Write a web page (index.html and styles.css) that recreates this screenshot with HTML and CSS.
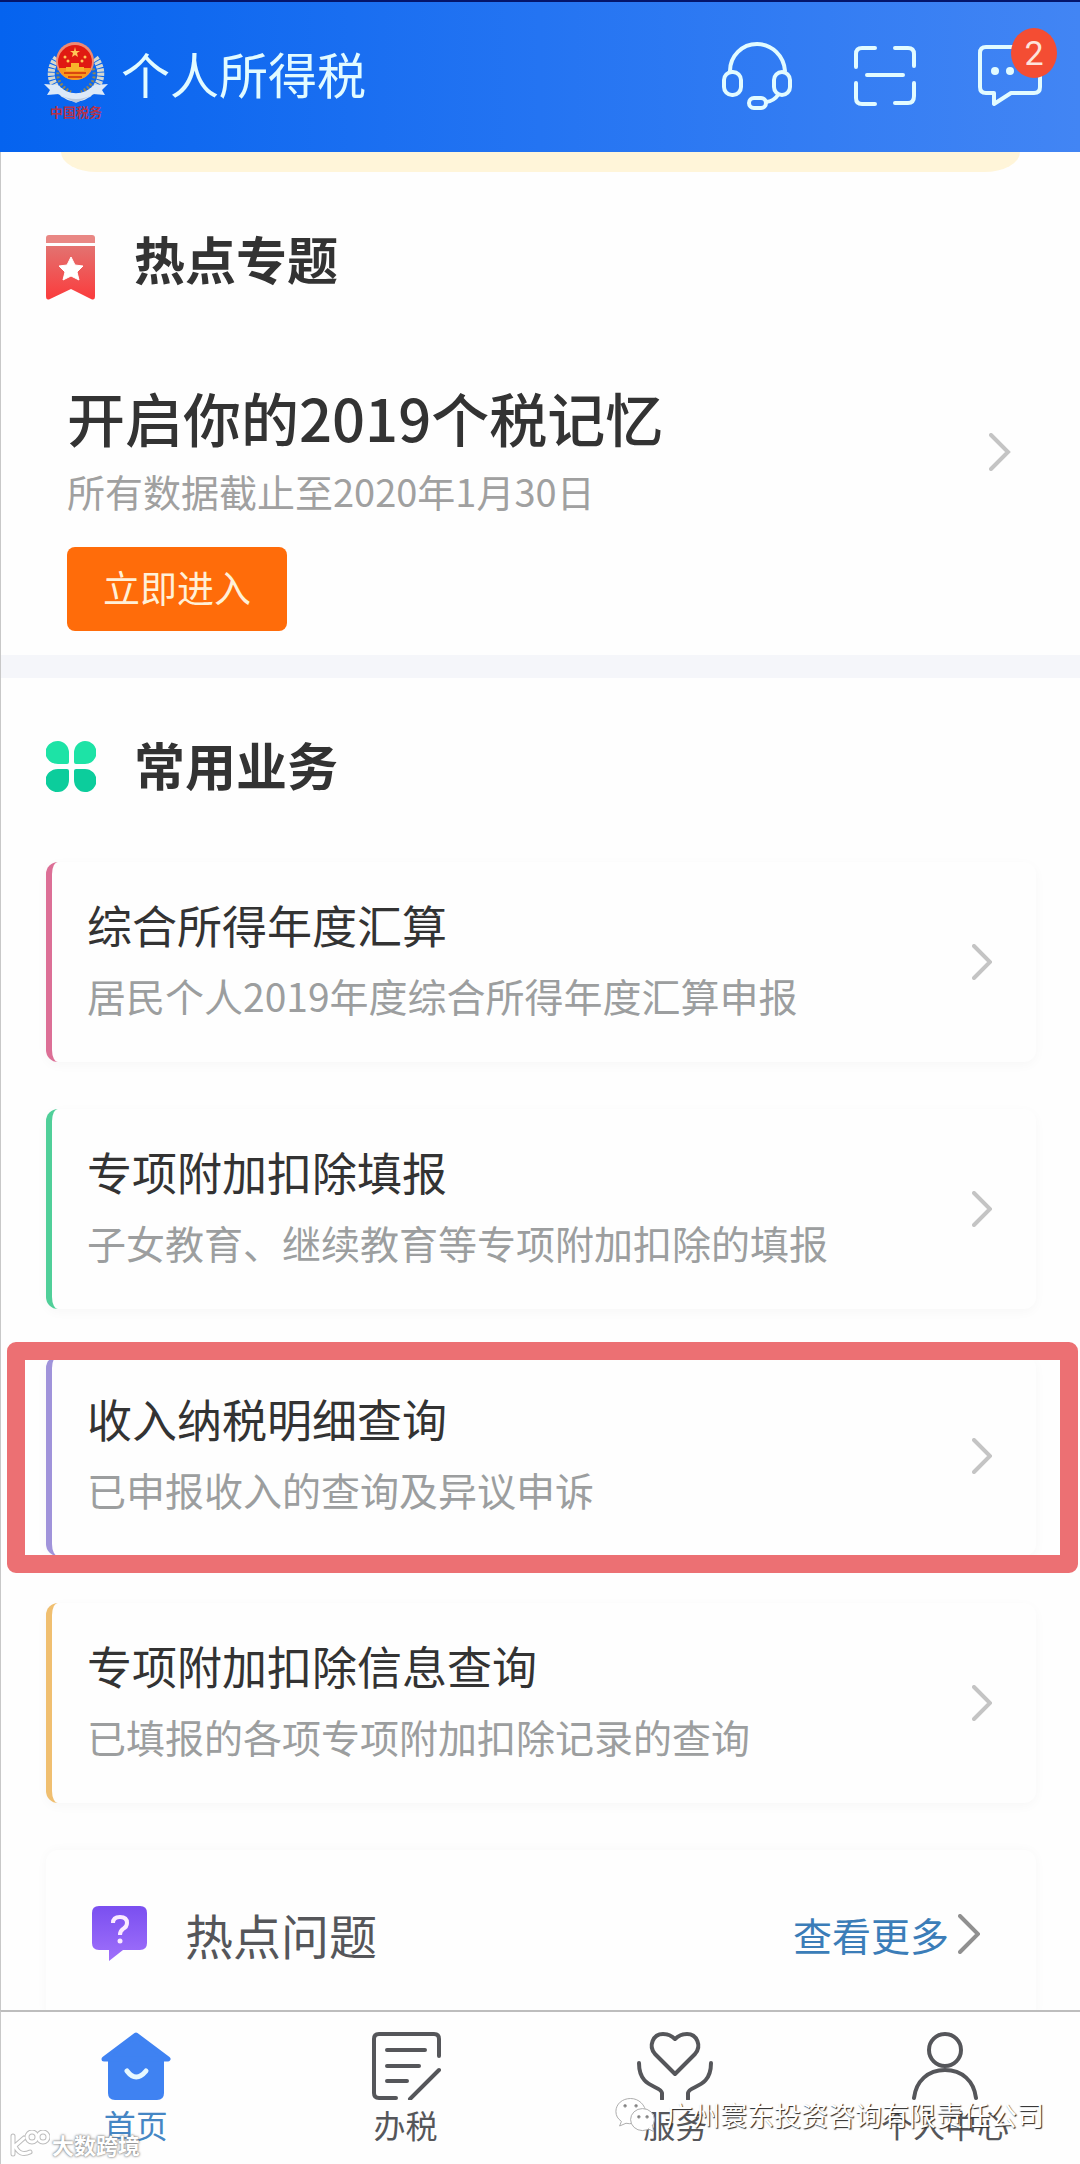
FILE: index.html
```html
<!DOCTYPE html>
<html lang="zh-CN">
<head>
    <meta charset="UTF-8">
    <meta name="viewport" content="width=device-width, initial-scale=1.0">
    <title>个人所得税</title>
    <link rel="stylesheet" href="styles.css">
</head>
<body>
    <header class="header">
        <svg class="logo" width="64" height="80" viewBox="0 0 64 80">
            <path d="M13 17C3 30 6 46 22 54M51 17C61 30 58 46 42 54" fill="none" stroke="#d5d8d0" stroke-width="7" stroke-dasharray="3 1"/>
            <path d="M17 24C10 34 15 45 27 51M47 24C54 34 49 45 37 51" fill="none" stroke="#8d8658" stroke-width="3" stroke-dasharray="2 2"/>
            <path d="M0 43l14 1c10 11 26 11 36 0l14-1-6 6 3 5-12-1c-10 10-24 10-34 0l-12 1 3-5z" fill="#dce9f8"/>
            <path d="M14 53q18 10 36 0l-18 9z" fill="#b9c9dc"/>
            <circle cx="31" cy="20" r="19" fill="#f08a72"/>
            <circle cx="31" cy="21" r="17" fill="#e01a12"/>
            <path d="M15 27h32c-2 8-8 12-16 12s-14-4-16-12z" fill="#f99a1c"/>
            <path d="M22 26h18v4H22zM27 22h8v4h-8z" fill="#f7b52b"/>
            <path d="M20 32h22M24 36h14" stroke="#d9480f" stroke-width="2"/>
            <path d="M31 6l1 4h4l-3 2 1 4-3-2-3 2 1-4-3-2h4z" fill="#ffc857"/>
            <circle cx="21" cy="16" r="1.500" fill="#ffc857"/>
            <circle cx="41" cy="16" r="1.500" fill="#ffc857"/>
            <circle cx="24" cy="20" r="1.500" fill="#ffc857"/>
            <circle cx="38" cy="20" r="1.500" fill="#ffc857"/>
            <text class="logo-text" x="32" y="76" text-anchor="middle">中国税务</text>
        </svg>
        <h1 class="app-title">个人所得税</h1>
        <div class="header-actions">
            <button class="icon-button" aria-label="客服">
                <svg width="70" height="68" viewBox="0 0 70 68" fill="none" stroke="currentColor" stroke-width="4" stroke-linecap="round">
                    <path d="M8 29C8 14 20 2 35 2s27 12 28 27"/>
                    <rect x="2" y="30" width="17" height="23" rx="8"/>
                    <rect x="52" y="30" width="16" height="23" rx="8"/>
                    <path d="M56 53q-4 6-12 7"/>
                    <rect x="27" y="56" width="17" height="10" rx="5"/>
                </svg>
            </button>
            <button class="icon-button" aria-label="扫一扫">
                <svg width="62" height="60" viewBox="0 0 62 60" fill="none" stroke="currentColor" stroke-width="4" stroke-linecap="round">
                    <path d="M21 2H8q-6 0-6 6v13M41 2h13q6 0 6 6v12M2 37v15q0 6 6 6h13M60 37v13q0 7-6 7H41M13 29h36"/>
                </svg>
            </button>
            <button class="icon-button" aria-label="消息">
                <svg width="64" height="62" viewBox="0 0 64 62" fill="none" stroke="currentColor" stroke-width="4" stroke-linejoin="round">
                    <path d="M8 2h48q6 0 6 6v34q0 6-6 6H33L16 59V48H8q-6 0-6-6V8q0-6 6-6z"/>
                    <circle cx="17" cy="26" r="4" fill="currentColor" stroke="none"/>
                    <circle cx="32" cy="26" r="4" fill="currentColor" stroke="none"/>
                </svg>
                <span class="badge">2</span>
            </button>
        </div>
    </header>

    <main class="content">
        <div class="banner"></div>

        <section class="topics">
            <div class="section-head">
                <svg width="50" height="66" viewBox="0 0 50 66">
                    <defs>
                        <linearGradient id="ribbon" x1="0" y1="0" x2="0" y2="1">
                            <stop offset="0" stop-color="#e37270"/>
                            <stop offset="1" stop-color="#fb3b3c"/>
                        </linearGradient>
                    </defs>
                    <path d="M3 0h43q3 0 3 3v5H0V3q0-3 3-3z" fill="#e98784"/>
                    <path d="M0 11h49v50q0 5-4 3L25 54 4 64q-4 2-4-3z" fill="url(#ribbon)"/>
                    <path d="M25 22l4 8 8 1-6 6 2 8-8-4-8 4 2-8-6-6 8-1z" fill="#fff" stroke="#fff" stroke-width="1" stroke-linejoin="round"/>
                </svg>
                <h2 class="section-title">热点专题</h2>
            </div>
            <div class="topic">
                <div class="topic-text">
                    <h3 class="topic-title">开启你的2019个税记忆</h3>
                    <p class="topic-note">所有数据截止至2020年1月30日</p>
                    <button class="enter-button">立即进入</button>
                </div>
                <svg class="chevron" width="22" height="38" viewBox="0 0 22 38">
                    <path d="M2 2l17 17L2 36"/>
                </svg>
            </div>
        </section>

        <section class="services">
            <div class="section-head">
                <svg width="50" height="51" viewBox="0 0 50 51">
                    <path d="M12 0a11 12 0 0 1 11 12v9q0 2-2 2h-9A12 11 0 0 1 12 0zM39 0a11 12 0 0 0-11 12v9q0 2 2 2h9A11 11 0 0 0 39 0z" fill="#1de3a6"/>
                    <path d="M12 51a11 12 0 0 0 11-12v-9q0-2-2-2h-9A12 11 0 0 0 12 51zM39 51a11 12 0 0 1-11-12v-9q0-2 2-2h9A11 11 0 0 1 39 51z" fill="#0ccd9c"/>
                </svg>
                <h2 class="section-title">常用业务</h2>
            </div>
            <div class="cards">
                <a class="card card-pink" href="#">
                    <div class="card-text">
                        <h3 class="card-title">综合所得年度汇算</h3>
                        <p class="card-note">居民个人2019年度综合所得年度汇算申报</p>
                    </div>
                    <svg class="chevron" width="20" height="36" viewBox="0 0 20 36"><path d="M2 2l16 16L2 34"/></svg>
                </a>
                <a class="card card-green" href="#">
                    <div class="card-text">
                        <h3 class="card-title">专项附加扣除填报</h3>
                        <p class="card-note">子女教育、继续教育等专项附加扣除的填报</p>
                    </div>
                    <svg class="chevron" width="20" height="36" viewBox="0 0 20 36"><path d="M2 2l16 16L2 34"/></svg>
                </a>
                <a class="card card-purple marked" href="#">
                    <div class="card-text">
                        <h3 class="card-title">收入纳税明细查询</h3>
                        <p class="card-note">已申报收入的查询及异议申诉</p>
                    </div>
                    <svg class="chevron" width="20" height="36" viewBox="0 0 20 36"><path d="M2 2l16 16L2 34"/></svg>
                </a>
                <a class="card card-yellow" href="#">
                    <div class="card-text">
                        <h3 class="card-title">专项附加扣除信息查询</h3>
                        <p class="card-note">已填报的各项专项附加扣除记录的查询</p>
                    </div>
                    <svg class="chevron" width="20" height="36" viewBox="0 0 20 36"><path d="M2 2l16 16L2 34"/></svg>
                </a>
                <div class="questions">
                    <svg width="55" height="56" viewBox="0 0 55 56">
                        <defs>
                            <linearGradient id="bubble" x1="0" y1="0" x2="0" y2="1">
                                <stop offset="0" stop-color="#7a4ff0"/>
                                <stop offset="1" stop-color="#a070fb"/>
                            </linearGradient>
                        </defs>
                        <path d="M7 0h41q7 0 7 7v30q0 7-7 7H31L17 55V44H7q-7 0-7-7V7q0-7 7-7z" fill="url(#bubble)"/>
                        <path d="M21 17q0-6 7-6t7 6q0 4-4 6-3 2-3 6" fill="none" stroke="#fbeaff" stroke-width="4"/>
                        <circle cx="28" cy="35" r="2.500" fill="#fbeaff"/>
                    </svg>
                    <h2 class="questions-title">热点问题</h2>
                    <a class="more" href="#">查看更多
                        <svg class="chevron chevron-dark" width="22" height="40" viewBox="0 0 22 40"><path d="M2 2l18 18L2 38"/></svg>
                    </a>
                </div>
            </div>
        </section>
    </main>

    <nav class="tabbar">
        <a class="tab active" href="#">
            <svg width="70" height="68" viewBox="0 0 70 68">
                <path d="M6 25v2h1v34q0 7 7 7h42q7 0 7-7V27h1z" fill="#3f82f2"/>
                <path d="M3 27L35 3l32 24z" fill="#3f82f2" stroke="#3f82f2" stroke-width="5" stroke-linejoin="round"/>
                <path d="M26 39q9 12 19 0" fill="none" stroke="#e6f8ff" stroke-width="5" stroke-linecap="round"/>
            </svg>
            <span>首页</span>
        </a>
        <a class="tab" href="#">
            <svg width="70" height="68" viewBox="0 0 70 68" fill="none" stroke="#55565a" stroke-width="4" stroke-linecap="round">
                <path d="M25 66H8q-5 0-5-5V7q0-5 5-5h55q5 0 5 5v17M16 18h38M16 34h32M16 49h20M68 38L39 67"/>
            </svg>
            <span>办税</span>
        </a>
        <a class="tab" href="#">
            <svg width="76" height="68" viewBox="0 0 76 68" fill="none" stroke="#55565a" stroke-width="4" stroke-linecap="round" stroke-linejoin="round">
                <path d="M38 42L18 22C11 14 16 2 26 2q7 0 12 5 5-5 12-5c10 0 15 12 8 20z"/>
                <path d="M2 31c0 26 22 22 23 30v6M74 31c0 26-22 22-23 30v6"/>
            </svg>
            <span>服务</span>
        </a>
        <a class="tab" href="#">
            <svg width="66" height="68" viewBox="0 0 66 68" fill="none" stroke="#55565a" stroke-width="4" stroke-linecap="round">
                <circle cx="33" cy="18" r="16"/>
                <path d="M2 66c2-17 14-28 31-28s29 11 31 28"/>
            </svg>
            <span>个人中心</span>
        </a>

        <div class="watermark watermark-right">
            <svg width="44" height="36" viewBox="0 0 48 38" fill="#fff" stroke="#a5a5a5" stroke-width="1">
                <path d="M17 1C8 1 1 7 1 15c0 5 2 8 6 11l-2 5 7-3q4 1 8 0l14-11C33 8 26 1 17 1z"/>
                <ellipse cx="30" cy="24" rx="13" ry="12"/>
                <path d="M36 34l6 3-1-7"/>
                <circle cx="11" cy="9" r="1.500" fill="#777"/>
                <circle cx="23" cy="9" r="1.500" fill="#777"/>
                <circle cx="26" cy="21" r="1.500" fill="#777"/>
                <circle cx="35" cy="21" r="1.500" fill="#777"/>
            </svg>
            <span>广州寰东投资咨询有限责任公司</span>
        </div>
        <div class="watermark watermark-left">
            <svg width="40" height="28" viewBox="0 0 40 28" fill="none" stroke-linecap="round">
                <g stroke="#bdbdbd" stroke-width="5">
                    <path d="M3 6v18M14 8L5 16q5 11 15 6"/>
                    <circle cx="22" cy="7" r="5"/>
                    <circle cx="33" cy="7" r="5"/>
                </g>
                <g stroke="#fff" stroke-width="3">
                    <path d="M3 6v18M14 8L5 16q5 11 15 6"/>
                    <circle cx="22" cy="7" r="5"/>
                    <circle cx="33" cy="7" r="5"/>
                </g>
            </svg>
            <span>大数跨境</span>
        </div>
    </nav>
</body>
</html>
```

FILE: styles.css
```css
* {
    box-sizing: border-box;
}

body {
    font-family: "Noto Sans CJK SC", "Noto Sans", sans-serif;
    margin: 0;
    height: 100vh;
    display: flex;
    flex-direction: column;
    background: #fefefe;
    color: #333;
}

h1, h2, h3, p {
    margin: 0;
    font-weight: 400;
}

a {
    color: inherit;
    text-decoration: none;
}

button {
    font-family: inherit;
    border: none;
    cursor: pointer;
}

svg {
    display: block;
    flex: none;
}

/* Header */
.header {
    display: flex;
    align-items: center;
    flex: none;
    height: 152px;
    padding: 0 38px 2px 44px;
    border-top: 2px solid #04156b;
    background: linear-gradient(to right, #0563ef, #2474f2 50%, #4285f4);
    color: #e2fbff;
}

.logo {
    margin-top: 10px;
}

.logo-text {
    font-size: 13px;
    font-weight: 700;
    fill: #b5324a;
}

.app-title {
    flex: 1;
    margin-left: 13px;
    font-size: 49px;
    line-height: 60px;
    padding-bottom: 6px;
}

.header-actions {
    display: flex;
    align-items: center;
    gap: 62px;
}

.icon-button {
    position: relative;
    padding: 0;
    background: none;
    color: #e2fbff;
}

.badge {
    position: absolute;
    top: -17px;
    right: -15px;
    width: 46px;
    height: 50px;
    border-radius: 50%;
    background: #f44d33;
    color: #fde4dc;
    font-family: Roboto, sans-serif;
    font-size: 34px;
    line-height: 50px;
    text-align: center;
}

/* Content */
.content {
    flex: 1;
    min-height: 0;
    overflow: hidden;
    border-left: 1px solid #c8c8c8;
}

.banner {
    height: 20px;
    margin: 0 60px;
    border-radius: 0 0 36px 36px / 0 0 20px 20px;
    background: #fff5d9;
}

.section-head {
    display: flex;
    align-items: flex-start;
    gap: 38px;
}

.section-title {
    font-size: 51px;
    font-weight: 700;
    line-height: 46px;
}

.topics {
    padding: 63px 69px 24px 45px;
    border-bottom: 23px solid #f5f6fa;
}

.topic {
    display: flex;
    align-items: flex-start;
    justify-content: space-between;
    padding: 86px 0 0 21px;
}

.topic .chevron {
    margin-top: 46px;
}

.topic-title {
    font-size: 58px;
    font-weight: 500;
    line-height: 60px;
}

.topic-note {
    margin-top: 20px;
    font-size: 38px;
    line-height: 48px;
    color: #a0a0a0;
}

.enter-button {
    display: block;
    margin-top: 32px;
    padding: 16px 36px 20px;
    border-radius: 8px;
    background: #ff6c0a;
    color: #fff0d8;
    font-size: 37px;
    line-height: 48px;
}

.chevron {
    fill: none;
    stroke: #c4c4c4;
    stroke-width: 4;
    stroke-linecap: round;
}

.services {
    padding: 63px 44px 0 45px;
}

.cards {
    display: grid;
    gap: 47px;
    margin-top: 70px;
}

.card {
    position: relative;
    display: flex;
    align-items: center;
    justify-content: space-between;
    padding: 34px 44px 34px 35px;
    border-left: 6px solid;
    border-radius: 12px;
    background: #fefefe;
    box-shadow: 0 3px 12px rgba(0, 0, 0, 0.03);
}

.card-text {
    padding-bottom: 8px;
}

.card-title {
    font-size: 45px;
    line-height: 58px;
    color: #333;
}

.card-note {
    margin-top: 18px;
    font-size: 39px;
    line-height: 46px;
    padding-bottom: 2px;
    color: #9c9e9f;
}

.card-pink {
    border-color: #dc6f96;
}

.card-green {
    border-color: #50cf99;
}

.card-purple {
    border-color: #a093da;
}

.card-yellow {
    border-color: #f0bf70;
}

/* Red frame drawn over the card */
.marked::after {
    content: "";
    position: absolute;
    top: -14px;
    right: -42px;
    bottom: -17px;
    left: -45px;
    border: 18px solid #ec7073;
    border-radius: 9px;
}

.questions {
    display: flex;
    align-items: center;
    padding: 56px 56px 60px 46px;
    border-radius: 12px;
    box-shadow: 0 0 12px rgba(0, 0, 0, 0.03);
}

.questions-title {
    flex: 1;
    margin-left: 38px;
    font-size: 48px;
    line-height: 56px;
    color: #55565a;
}

.more {
    display: flex;
    align-items: center;
    gap: 9px;
    font-size: 39px;
    line-height: 56px;
    color: #3b7db8;
}

.chevron-dark {
    stroke: #909090;
}

/* Bottom tabs */
.tabbar {
    position: relative;
    display: grid;
    grid-template-columns: repeat(4, 1fr);
    flex: none;
    height: 154px;
    border-top: 2px solid #bdbdbd;
    border-left: 1px solid #c8c8c8;
}

.tab {
    display: flex;
    flex-direction: column;
    align-items: center;
    gap: 6px;
    padding-top: 20px;
    font-size: 32px;
    line-height: 36px;
    color: #55565a;
}

.active {
    color: #4586c4;
}

.watermark {
    position: absolute;
    display: flex;
    align-items: center;
    white-space: nowrap;
    color: #fff;
}

.watermark-right {
    right: 36px;
    bottom: 31px;
    gap: 7px;
    font-size: 27px;
    line-height: 36px;
    text-shadow: 1px 1px 1px #222;
}

.watermark-left {
    left: 9px;
    bottom: 6px;
    gap: 2px;
    font-size: 22px;
    font-weight: 700;
    line-height: 28px;
    text-shadow: 0 0 2px #777, 0 0 3px #999;
}
```
